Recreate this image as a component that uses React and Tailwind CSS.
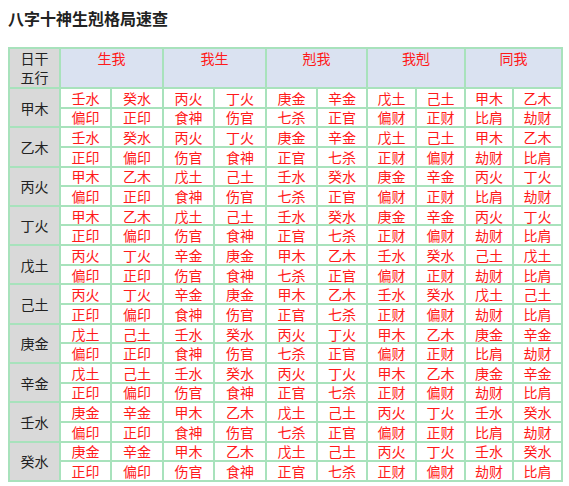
import React from "react";

const rows = [
  ["甲木", ["壬水","癸水","丙火","丁火","庚金","辛金","戊土","己土","甲木","乙木"], ["偏印","正印","食神","伤官","七杀","正官","偏财","正财","比肩","劫财"]],
  ["乙木", ["壬水","癸水","丙火","丁火","庚金","辛金","戊土","己土","甲木","乙木"], ["正印","偏印","伤官","食神","正官","七杀","正财","偏财","劫财","比肩"]],
  ["丙火", ["甲木","乙木","戊土","己土","壬水","癸水","庚金","辛金","丙火","丁火"], ["偏印","正印","食神","伤官","七杀","正官","偏财","正财","比肩","劫财"]],
  ["丁火", ["甲木","乙木","戊土","己土","壬水","癸水","庚金","辛金","丙火","丁火"], ["正印","偏印","伤官","食神","正官","七杀","正财","偏财","劫财","比肩"]],
  ["戊土", ["丙火","丁火","辛金","庚金","甲木","乙木","壬水","癸水","己土","戊土"], ["偏印","正印","伤官","食神","七杀","正官","偏财","正财","劫财","比肩"]],
  ["己土", ["丙火","丁火","辛金","庚金","甲木","乙木","壬水","癸水","戊土","己土"], ["正印","偏印","食神","伤官","正官","七杀","正财","偏财","劫财","比肩"]],
  ["庚金", ["戊土","己土","壬水","癸水","丙火","丁火","甲木","乙木","庚金","辛金"], ["偏印","正印","食神","伤官","七杀","正官","偏财","正财","比肩","劫财"]],
  ["辛金", ["戊土","己土","壬水","癸水","丙火","丁火","甲木","乙木","庚金","辛金"], ["正印","偏印","伤官","食神","正官","七杀","正财","偏财","劫财","比肩"]],
  ["壬水", ["庚金","辛金","甲木","乙木","戊土","己土","丙火","丁火","壬水","癸水"], ["偏印","正印","食神","伤官","七杀","正官","偏财","正财","比肩","劫财"]],
  ["癸水", ["庚金","辛金","甲木","乙木","戊土","己土","丙火","丁火","壬水","癸水"], ["正印","偏印","伤官","食神","正官","七杀","正财","偏财","劫财","比肩"]],
];

const widths = [51, 51, 52, 51, 52, 51, 50, 49, 49, 48, 49];
const heads = ["生我", "我生", "剋我", "我剋", "同我"];

const td = "border-2 border-[#a8e2bc] p-0 text-center align-middle text-[#ff1a1a] text-[14px] leading-none";

export default function App() {
  return (
    <div
      className="w-[569px] h-[486px] bg-white px-2 pt-[8px]"
      style={{ fontFamily: '"Noto Sans CJK SC", "Noto Sans", sans-serif' }}
    >
      <div className="text-[16px] font-bold text-[#222] leading-[20px] mb-[19px]">八字十神生剋格局速查</div>
      <table className="table-fixed border-collapse w-[554px]">
        <colgroup>
          {widths.map((w, i) => (
            <col key={i} style={{ width: w }} />
          ))}
        </colgroup>
        <thead>
          <tr className="h-[39px]">
            <th className="border-2 border-[#a8e2bc] bg-[#d9d9d9] p-0 align-top font-normal text-[14px] leading-[19px] text-[#222]">
              日干<br />五行
            </th>
            {heads.map((h) => (
              <th
                key={h}
                colSpan={2}
                className="border-2 border-[#a8e2bc] bg-[#dae2f1] p-0 align-top font-normal text-[14px] leading-[19px] text-[#ff1a1a]"
              >
                {h}
              </th>
            ))}
          </tr>
        </thead>
        <tbody>
          {rows.map(([stem, a, b]) => (
            <React.Fragment key={stem}>
              <tr className="h-[19.65px]">
                <td rowSpan={2} className="border-2 border-[#a8e2bc] bg-[#d9d9d9] p-0 text-center align-middle text-[14px] leading-none text-[#222]">
                  {stem}
                </td>
                {a.map((x, i) => (
                  <td key={i} className={td}>{x}</td>
                ))}
              </tr>
              <tr className="h-[19.65px]">
                {b.map((x, i) => (
                  <td key={i} className={td}>{x}</td>
                ))}
              </tr>
            </React.Fragment>
          ))}
        </tbody>
      </table>
    </div>
  );
}
